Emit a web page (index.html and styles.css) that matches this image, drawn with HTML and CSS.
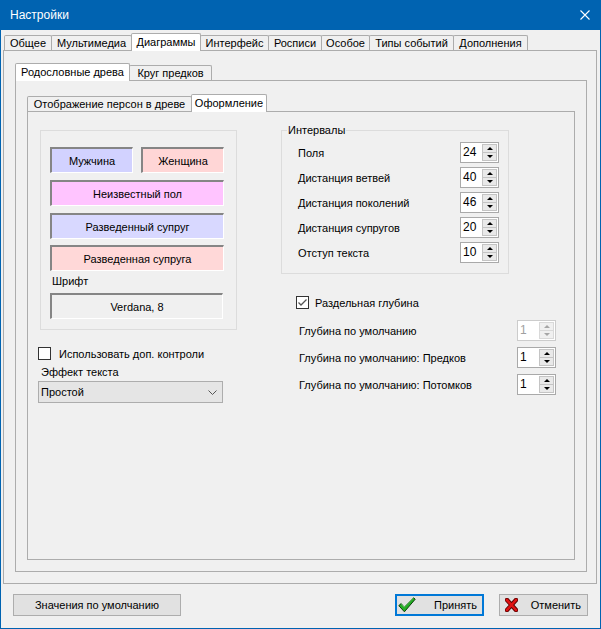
FILE: index.html
```html
<!DOCTYPE html>
<html lang="ru">
<head>
<meta charset="utf-8">
<title>Настройки</title>
<link rel="stylesheet" href="styles.css">
</head>
<body>
<div class="window">
  <div class="titlebar">
    <span class="title">Настройки</span>
    <svg class="close" width="10" height="10" viewBox="0 0 10 10"><path d="M0.5 0.5L9.5 9.5M9.5 0.5L0.5 9.5" stroke="#fff" stroke-width="1.1" fill="none"/></svg>
  </div>
  <div class="content">
    <div class="tabctl outer">
      <div class="strip s1">
        <div class="tab t-gen">Общее</div>
        <div class="tab t-mm">Мультимедиа</div>
        <div class="tab sel t-dia">Диаграммы</div>
        <div class="tab t-int">Интерфейс</div>
        <div class="tab t-ros">Росписи</div>
        <div class="tab t-osb">Особое</div>
        <div class="tab t-typ">Типы событий</div>
        <div class="tab t-add">Дополнения</div>
      </div>
      <div class="panel p1">
        <div class="strip">
          <div class="tab sel t-tree">Родословные древа</div>
          <div class="tab t-circ">Круг предков</div>
        </div>
        <div class="panel p2">
          <div class="strip">
            <div class="tab t-disp">Отображение персон в древе</div>
            <div class="tab sel t-des">Оформление</div>
          </div>
          <div class="panel p3">
            <div class="col-left">
              <div class="group colors">
                <div class="pair">
                  <div class="swatch male">Мужчина</div>
                  <div class="swatch female">Женщина</div>
                </div>
                <div class="swatch wide unknown">Неизвестный пол</div>
                <div class="swatch wide div-m">Разведенный супруг</div>
                <div class="swatch wide div-f last">Разведенная супруга</div>
                <div class="font-label">Шрифт</div>
                <div class="swatch font-box">Verdana, 8</div>
              </div>
              <div class="check-row extra">
                <span class="cb"></span>
                <span class="cb-label">Использовать доп. контроли</span>
              </div>
              <div class="caption">Эффект текста</div>
              <div class="combo">
                <span>Простой</span>
                <svg width="9" height="5" viewBox="0 0 9 5"><path d="M0.5 0.5L4.5 4.5L8.5 0.5" stroke="#555" stroke-width="1" fill="none"/></svg>
              </div>
            </div>
            <div class="col-right">
              <div class="group intervals">
                <span class="legend">Интервалы</span>
                <div class="row"><span>Поля</span><div class="spin"><span class="v">24</span><span class="btns"><span class="up"></span><span class="dn"></span></span></div></div>
                <div class="row"><span>Дистанция ветвей</span><div class="spin"><span class="v">40</span><span class="btns"><span class="up"></span><span class="dn"></span></span></div></div>
                <div class="row"><span>Дистанция поколений</span><div class="spin"><span class="v">46</span><span class="btns"><span class="up"></span><span class="dn"></span></span></div></div>
                <div class="row"><span>Дистанция супругов</span><div class="spin"><span class="v">20</span><span class="btns"><span class="up"></span><span class="dn"></span></span></div></div>
                <div class="row"><span>Отступ текста</span><div class="spin"><span class="v">10</span><span class="btns"><span class="up"></span><span class="dn"></span></span></div></div>
              </div>
              <div class="check-row sep">
                <span class="cb checked"><svg width="11" height="11" viewBox="0 0 11 11"><path d="M1.5 5.5L4 8L9.5 2.5" stroke="#555" stroke-width="1.3" fill="none"/></svg></span>
                <span class="cb-label">Раздельная глубина</span>
              </div>
              <div class="depth">
                <div class="drow"><span>Глубина по умолчанию</span><div class="spin dis"><span class="v">1</span><span class="btns"><span class="up"></span><span class="dn"></span></span></div></div>
                <div class="drow"><span>Глубина по умолчанию: Предков</span><div class="spin"><span class="v">1</span><span class="btns"><span class="up"></span><span class="dn"></span></span></div></div>
                <div class="drow"><span>Глубина по умолчанию: Потомков</span><div class="spin"><span class="v">1</span><span class="btns"><span class="up"></span><span class="dn"></span></span></div></div>
              </div>
            </div>
          </div>
        </div>
      </div>
    </div>
    <div class="actions">
      <div class="btn defaults">Значения по умолчанию</div>
      <div class="right-btns">
        <div class="btn ok">
          <svg width="18" height="16" viewBox="0 0 18 16"><path d="M0.8 8.6L3.2 6.6L6.2 10.2L15.6 0.8L17.2 2.2L6.4 14.8Z" fill="#22b022" stroke="#0b3d0b" stroke-width="1" stroke-linejoin="round"/><path d="M3.2 6.6L6.2 10.2L15.6 0.8" stroke="#7ee07e" stroke-width="0.8" fill="none"/></svg>
          <span>Принять</span>
        </div>
        <div class="btn cancel">
          <svg width="13" height="14" viewBox="0 0 13 14"><path d="M2 2L11 12M11 2L2 12" stroke="#5a0000" stroke-width="4.4" stroke-linecap="square" fill="none"/><path d="M2 2L11 12M11 2L2 12" stroke="#e01010" stroke-width="2.6" stroke-linecap="square" fill="none"/></svg>
          <span>Отменить</span>
        </div>
      </div>
    </div>
  </div>
</div>
</body>
</html>
```

FILE: styles.css
```css
* { box-sizing: border-box; }
html, body { margin: 0; padding: 0; }
body {
  font-family: "Liberation Sans", Arial, sans-serif;
  font-size: 11px;
  color: #000;
  background: #f0f0f0;
}
.window {
  width: 601px;
  height: 629px;
  border: 1px solid #0063b1;
  border-top: 0;
  background: #f0f0f0;
  display: flex;
  flex-direction: column;
}
.titlebar {
  height: 30px;
  flex: none;
  background: #0063b1;
  color: #fff;
  font-size: 12px;
  display: flex;
  align-items: center;
  justify-content: space-between;
  padding: 0 10px 0 9px;
}
.content { flex: 1; }

/* tabs */
.outer { margin: 3px 3px 0 2px; }
.strip {
  display: flex;
  align-items: flex-end;
  height: 17px;
}
.s1 { padding-left: 1px; }
.tab {
  height: 15px;
  border: 1px solid #acacac;
  border-bottom: 0;
  border-radius: 2px 2px 0 0;
  background: #f0f0f0;
  text-align: center;
  line-height: 14px;
  white-space: nowrap;
  margin-left: -1px;
  flex: none;
}
.tab:first-child { margin-left: 0; }
.tab.sel {
  height: 18px;
  margin-bottom: -1px;
  background: #fff;
  position: relative;
  z-index: 1;
  line-height: 16px;
}
.t-gen { width: 48px; }
.t-mm { width: 81px; }
.t-dia { width: 70px; }
.t-int { width: 69px; }
.t-ros { width: 54px; }
.t-osb { width: 49px; }
.t-typ { width: 85px; }
.t-add { width: 75px; }
.t-tree { width: 115px; }
.t-circ { width: 83px; }
.t-disp { width: 165px; }
.t-des { width: 76px; }

.panel { border: 1px solid #acacac; background: #f0f0f0; }
.p1 { height: 534px; padding: 12px 9px 11px 11px; }
.p2 { height: 492px; padding: 13px 11px 11px 11px; }
.p3 {
  height: 449px;
  padding: 18px 0 0 10px;
  display: flex;
  align-items: flex-start;
  gap: 44px;
}

/* left column */
.col-left { width: 199px; }
.group { border: 1px solid #dcdcdc; }
.colors {
  margin-left: 2px;
  width: 197px;
  height: 200px;
  padding: 16px 0 0 9px;
}
.pair { display: flex; gap: 8px; }
.swatch {
  height: 26px;
  border-style: solid;
  border-width: 2px 1px 1px 2px;
  border-color: #858585 #fff #fff #858585;
  display: flex;
  align-items: center;
  justify-content: center;
  white-space: nowrap;
}
.pair .swatch { width: 83px; }
.wide { width: 174px; margin-top: 7px; }
.wide.last { margin-top: 6px; }
.male { background: #d2d2ff; }
.female { background: #ffd6d6; }
.unknown { background: #ffc4ff; }
.div-m { background: #d8d8ff; }
.div-f { background: #ffd8d8; }
.font-label {
  margin-top: 4px;
  line-height: 13px;
  padding-left: 2px;
}
.font-box {
  margin-top: 5px;
  width: 173px;
  background: #f0f0f0;
}
.check-row {
  display: flex;
  align-items: center;
  height: 13px;
}
.extra { margin-top: 17px; }
.cb {
  width: 13px;
  height: 13px;
  border: 1px solid #333;
  background: #fff;
  flex: none;
  display: flex;
  align-items: center;
  justify-content: center;
}
.extra .cb-label { margin-left: 8px; }
.caption {
  margin-top: 6px;
  line-height: 13px;
  padding-left: 3px;
}
.combo {
  margin-top: 2px;
  width: 185px;
  height: 22px;
  background: #e5e5e5;
  border: 1px solid #adadad;
  display: flex;
  align-items: center;
  justify-content: space-between;
  padding: 0 5px 0 2px;
}

/* right column */
.col-right { width: 275px; }
.intervals {
  position: relative;
  width: 228px;
  height: 144px;
  padding: 11px 9px 0 16px;
  display: flex;
  flex-direction: column;
  gap: 4px;
}
.legend {
  position: absolute;
  top: -7px;
  left: 5px;
  padding: 0 1px;
  line-height: 13px;
  background: #f0f0f0;
}
.row, .drow {
  display: flex;
  align-items: center;
  justify-content: space-between;
  height: 21px;
}
.sep { margin-top: 22px; margin-left: 15px; }
.sep .cb-label { margin-left: 6px; }
.depth {
  margin-top: 11px;
  padding-left: 18px;
  display: flex;
  flex-direction: column;
  gap: 6px;
}

/* spinner */
.spin {
  width: 39px;
  height: 21px;
  border: 1px solid #a9a9a9;
  background: #fff;
  display: flex;
  padding: 1px;
  flex: none;
}
.spin .v {
  flex: 1;
  font-size: 12px;
  line-height: 17px;
  padding-left: 1px;
}
.spin .btns {
  width: 15px;
  display: flex;
  flex-direction: column;
  border: 1px solid #c4c4c4;
  background: #e9e9e9;
}
.spin .btns span {
  flex: 1;
  display: flex;
  align-items: center;
  justify-content: center;
}
.spin .btns span + span { border-top: 1px solid #c4c4c4; }
.spin .btns span::after {
  content: "";
  width: 0;
  height: 0;
  border-left: 3px solid transparent;
  border-right: 3px solid transparent;
}
.spin .up::after { border-bottom: 3px solid #000; }
.spin .dn::after { border-top: 3px solid #000; }
.spin.dis { border-color: #cccccc; color: #a0a0a0; }
.spin.dis .btns { border-color: #d9d9d9; background: #f0f0f0; }
.spin.dis .btns span + span { border-top-color: #d9d9d9; }
.spin.dis .up::after { border-bottom-color: #a6a6a6; }
.spin.dis .dn::after { border-top-color: #a6a6a6; }

/* buttons */
.actions {
  display: flex;
  justify-content: space-between;
  margin-top: 10px;
  padding: 0 12px;
}
.right-btns { display: flex; gap: 15px; }
.btn {
  height: 22px;
  background: #e1e1e1;
  border: 1px solid #adadad;
  display: flex;
  align-items: center;
  white-space: nowrap;
}
.defaults { width: 168px; justify-content: center; }
.ok {
  width: 89px;
  border: 2px solid #0078d7;
  justify-content: space-between;
  padding: 0 5px 0 1px;
}
.cancel {
  width: 89px;
  justify-content: space-between;
  padding: 0 6px 0 5px;
}
```
